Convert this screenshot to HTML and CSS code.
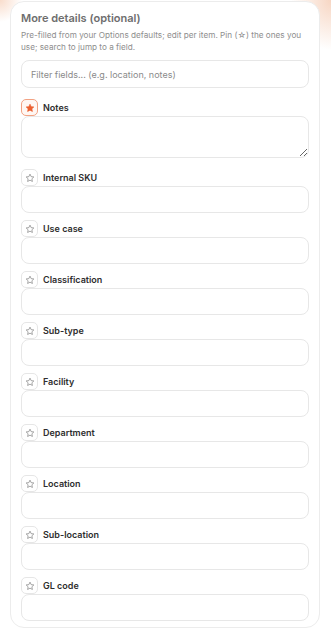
FILE: index.html
```html
<!DOCTYPE html>
<html>
<head>
<meta charset="utf-8">
<link rel="stylesheet" href="styles.css">
</head>
<body>
<div class="page">
  <section class="card">
    <h2 class="title">More details (optional)</h2>
    <p class="desc">Pre-filled from your Options defaults; edit per item. Pin (☆) the ones you use; search to jump to a field.</p>
    <input class="filter" type="text" placeholder="Filter fields... (e.g. location, notes)">

    <div class="field first">
      <div class="label-row">
        <button class="pin pinned"><svg viewBox="0 0 24 24"><path d="M12 2.8l2.8 5.9 6.4.8-4.7 4.4 1.2 6.4L12 17.2l-5.7 3.1 1.2-6.4-4.7-4.4 6.4-.8z"/></svg></button>
        <span class="label">Notes</span>
      </div>
      <textarea class="area"></textarea>
    </div>

    <div class="field">
      <div class="label-row"><button class="pin"><svg viewBox="0 0 24 24"><path d="M12 2.8l2.8 5.9 6.4.8-4.7 4.4 1.2 6.4L12 17.2l-5.7 3.1 1.2-6.4-4.7-4.4 6.4-.8z"/></svg></button><span class="label">Internal SKU</span></div>
      <input class="inp" type="text">
    </div>
    <div class="field">
      <div class="label-row"><button class="pin"><svg viewBox="0 0 24 24"><path d="M12 2.8l2.8 5.9 6.4.8-4.7 4.4 1.2 6.4L12 17.2l-5.7 3.1 1.2-6.4-4.7-4.4 6.4-.8z"/></svg></button><span class="label">Use case</span></div>
      <input class="inp" type="text">
    </div>
    <div class="field">
      <div class="label-row"><button class="pin"><svg viewBox="0 0 24 24"><path d="M12 2.8l2.8 5.9 6.4.8-4.7 4.4 1.2 6.4L12 17.2l-5.7 3.1 1.2-6.4-4.7-4.4 6.4-.8z"/></svg></button><span class="label">Classification</span></div>
      <input class="inp" type="text">
    </div>
    <div class="field">
      <div class="label-row"><button class="pin"><svg viewBox="0 0 24 24"><path d="M12 2.8l2.8 5.9 6.4.8-4.7 4.4 1.2 6.4L12 17.2l-5.7 3.1 1.2-6.4-4.7-4.4 6.4-.8z"/></svg></button><span class="label">Sub-type</span></div>
      <input class="inp" type="text">
    </div>
    <div class="field">
      <div class="label-row"><button class="pin"><svg viewBox="0 0 24 24"><path d="M12 2.8l2.8 5.9 6.4.8-4.7 4.4 1.2 6.4L12 17.2l-5.7 3.1 1.2-6.4-4.7-4.4 6.4-.8z"/></svg></button><span class="label">Facility</span></div>
      <input class="inp" type="text">
    </div>
    <div class="field">
      <div class="label-row"><button class="pin"><svg viewBox="0 0 24 24"><path d="M12 2.8l2.8 5.9 6.4.8-4.7 4.4 1.2 6.4L12 17.2l-5.7 3.1 1.2-6.4-4.7-4.4 6.4-.8z"/></svg></button><span class="label">Department</span></div>
      <input class="inp" type="text">
    </div>
    <div class="field">
      <div class="label-row"><button class="pin"><svg viewBox="0 0 24 24"><path d="M12 2.8l2.8 5.9 6.4.8-4.7 4.4 1.2 6.4L12 17.2l-5.7 3.1 1.2-6.4-4.7-4.4 6.4-.8z"/></svg></button><span class="label">Location</span></div>
      <input class="inp" type="text">
    </div>
    <div class="field">
      <div class="label-row"><button class="pin"><svg viewBox="0 0 24 24"><path d="M12 2.8l2.8 5.9 6.4.8-4.7 4.4 1.2 6.4L12 17.2l-5.7 3.1 1.2-6.4-4.7-4.4 6.4-.8z"/></svg></button><span class="label">Sub-location</span></div>
      <input class="inp" type="text">
    </div>
    <div class="field">
      <div class="label-row"><button class="pin"><svg viewBox="0 0 24 24"><path d="M12 2.8l2.8 5.9 6.4.8-4.7 4.4 1.2 6.4L12 17.2l-5.7 3.1 1.2-6.4-4.7-4.4 6.4-.8z"/></svg></button><span class="label">GL code</span></div>
      <input class="inp" type="text">
    </div>
  </section>
</div>
</body>
</html>
```
FILE: styles.css
```css
* { box-sizing: border-box; }
html, body { margin: 0; padding: 0; }
body {
  width: 331px;
  height: 630px;
  overflow: hidden;
  font-family: Inter, "Noto Sans", sans-serif;
  background:
    radial-gradient(circle at 0 0, #f9dccb 0, rgba(249,220,203,0) 22px),
    radial-gradient(ellipse 40px 50px at 331px 0, #f7d6c3 0, rgba(247,214,195,0) 100%),
    #ffffff;
}
.page {
  padding: 1px 11px 0 10px;
}
.card {
  background: #fff;
  border: 1px solid #ececec;
  border-radius: 14px;
  padding: 9px 10px 6px 10px;
  display: flex;
  flex-direction: column;
}
.title {
  margin: 0;
  font-size: 11px;
  font-weight: 600;
  color: #6e6e6e;
  line-height: 14px;
}
.desc {
  margin: 5px 0 0 0;
  font-size: 8.2px;
  line-height: 11.5px;
  color: #8e8e8e;
}
.filter {
  margin-top: 7px;
  height: 28px;
  width: 100%;
  border: 1px solid #e7e7e7;
  border-radius: 8px;
  padding: 0 9px;
  font-family: Inter, "Noto Sans", sans-serif;
  font-size: 9px;
  color: #333;
  outline: none;
  background: #fff;
}
.filter::placeholder { color: #8a8a8a; }
.field {
  display: flex;
  flex-direction: column;
  margin-top: 7px;
}
.field.first { margin-top: 11px; }
.label-row {
  display: flex;
  align-items: center;
  gap: 5px;
  height: 17px;
}
.pin {
  width: 17px;
  height: 17px;
  padding: 0;
  border: 1px solid #e6e6e6;
  border-radius: 5px;
  background: #fff;
  display: flex;
  align-items: center;
  justify-content: center;
}
.pin svg {
  width: 10px;
  height: 10px;
  fill: none;
  stroke: #7a7a7a;
  stroke-width: 1.6;
  stroke-linejoin: round;
}
.pin.pinned {
  border-color: #f2a283;
  background: #fff7f3;
}
.pin.pinned svg {
  fill: #ec5f2f;
  stroke: #ec5f2f;
}
.label {
  font-size: 9px;
  font-weight: 600;
  color: #2e2e2e;
}
.inp, .area {
  width: 100%;
  border: 1px solid #e7e7e7;
  border-radius: 8px;
  background: #fff;
  outline: none;
  font-family: Inter, "Noto Sans", sans-serif;
  font-size: 9px;
}
.inp { height: 27px; }
.area {
  height: 42px;
  display: block;
  resize: vertical;
}
.field.first + .field { margin-top: 11px; }
```
